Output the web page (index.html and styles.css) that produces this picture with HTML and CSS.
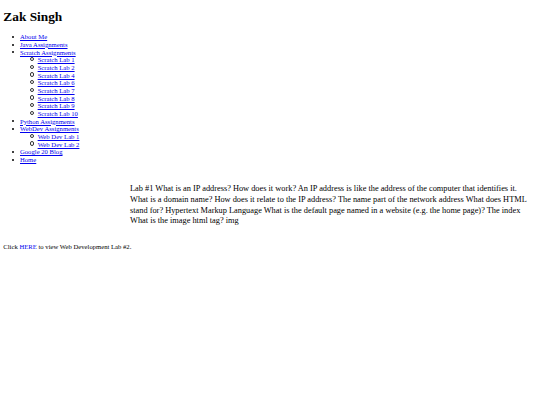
FILE: index.html
```html
<!DOCTYPE html>
<html>
<head>
<meta charset="utf-8">
<title>Zak Singh</title>
<link rel="stylesheet" href="styles.css">
</head>
<body class="page">
<h1 class="title">Zak Singh</h1>
<ul class="nav">
  <li><a href="#">About Me</a></li>
  <li><a href="#">Java Assignments</a></li>
  <li><a href="#">Scratch Assignments</a>
    <ul class="sub">
      <li><a href="#">Scratch Lab 1</a></li>
      <li><a href="#">Scratch Lab 2</a></li>
      <li><a href="#">Scratch Lab 4</a></li>
      <li><a href="#">Scratch Lab 6</a></li>
      <li><a href="#">Scratch Lab 7</a></li>
      <li><a href="#">Scratch Lab 8</a></li>
      <li><a href="#">Scratch Lab 9</a></li>
      <li><a href="#">Scratch Lab 10</a></li>
    </ul>
  </li>
  <li><a href="#">Python Assignments</a></li>
  <li><a href="#">WebDev Assignments</a>
    <ul class="sub">
      <li><a href="#">Web Dev Lab 1</a></li>
      <li><a href="#">Web Dev Lab 2</a></li>
    </ul>
  </li>
  <li><a href="#">Google 20 Blog</a></li>
  <li><a href="#">Home</a></li>
</ul>
<p class="lab">Lab #1 What is an IP address? How does it work? An IP address is like the address of the computer that identifies it. What is a domain name? How does it relate to the IP address? The name part of the network address What does HTML stand for? Hypertext Markup Language What is the default page named in a website (e.g. the home page)? The index What is the image html tag? img</p>
<p class="note">Click <a href="#">HERE</a> to view Web Development Lab #2.</p>
</body>
</html>
```
FILE: styles.css
```css
html {
  background: #fff;
}
.page {
  margin: 0 3.33px 3.33px 3.33px;
  font-family: "Liberation Serif", "Times New Roman", serif;
  font-size: 6.67px;
  line-height: 7.67px;
  color: #000;
}
a {
  color: #0000ee;
}
.title {
  font-size: 13.33px;
  line-height: 15.33px;
  margin: 8.93px 0;
}
.nav {
  margin: 6.67px 0;
  padding-left: 16.67px;
  list-style: none;
}
.nav li::before {
  content: "";
  display: inline-block;
  width: 2px;
  height: 2px;
  border-radius: 50%;
  background: #000;
  margin-left: -7.7px;
  margin-right: 5.7px;
  vertical-align: 1.3px;
}
.sub {
  margin: 0;
  padding-left: 16.67px;
  list-style: none;
}
.nav .sub li::before {
  width: 2.2px;
  height: 2.2px;
  background: transparent;
  border: 0.5px solid #333;
  margin-left: -6.6px;
  margin-right: 3.4px;
  vertical-align: 1px;
}
.lab {
  font-size: 8.33px;
  line-height: 10.7px;
  margin: 20.7px 0 0 0;
  padding-left: 126.7px;
  padding-right: 3px;
}
.note {
  margin: 15.5px 0 0 0;
}
```
